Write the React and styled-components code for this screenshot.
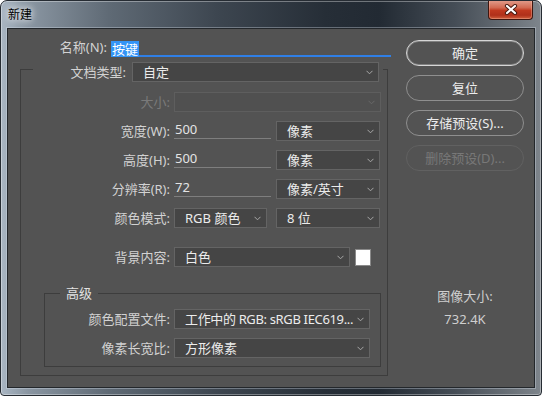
import React from 'react'
import styled, { createGlobalStyle } from 'styled-components'

const GlobalStyle = createGlobalStyle`
  html, body {
    margin: 0;
    padding: 0;
    background: #ffffff;
  }
  * { box-sizing: border-box; }
`

const FONT = `"Noto Sans", "Noto Sans CJK SC", sans-serif`

const Window = styled.div`
  width: 542px;
  height: 396px;
  display: flex;
  flex-direction: column;
  border: 1px solid #262c33;
  border-radius: 7px 7px 4px 4px;
  overflow: hidden;
  background: linear-gradient(90deg, #a9b6c3 0%, #8a96a2 5%, #5f6a75 20%, #3d4650 40%, #262e37 60%, #222a33 70%, #454d56 84%, #6c737a 95%, #7e858c 100%);
  box-shadow: inset 0 0 0 1px rgba(255, 255, 255, 0.35);
  font-family: ${FONT};
`

const TitleBar = styled.div`
  height: 27px;
  display: flex;
  justify-content: space-between;
  align-items: flex-start;
  padding-left: 7px;
  padding-right: 8px;
`

const Title = styled.div`
  font-size: 12px;
  line-height: 27px;
  color: #000;
  text-shadow: 0 0 6px rgba(255, 255, 255, 0.9), 0 0 10px rgba(255, 255, 255, 0.7);
`

const CloseButton = styled.div`
  width: 45px;
  height: 20px;
  margin-top: -1px;
  display: flex;
  align-items: center;
  justify-content: center;
  border: 1px solid #3e1710;
  border-top: none;
  border-radius: 0 0 4px 4px;
  background: linear-gradient(180deg, #e3a08f 0%, #d26a52 40%, #c0391f 55%, #b0301a 80%, #d0603d 100%);
  box-shadow: inset 0 0 0 1px rgba(255, 200, 180, 0.35);
`

const Client = styled.div`
  flex: 1;
  margin: 0 6px 7px 6px;
  background: #535353;
  border: 1px solid #23272b;
  box-shadow: 0 0 0 1px rgba(220, 230, 240, 0.35);
  display: grid;
  grid-template-columns: 371px 118px;
  column-gap: 15px;
  align-items: start;
  padding-left: 12px;
`

const LeftColumn = styled.div`
  padding-top: 8px;
  display: flex;
  flex-direction: column;
`

const RightColumn = styled.div`
  padding-top: 11px;
  display: flex;
  flex-direction: column;
  gap: 9px;
`

const NameRow = styled.div`
  display: flex;
  align-items: center;
  height: 20px;
`

const Label = styled.div`
  width: ${p => p.$w}px;
  flex: none;
  text-align: right;
  font-size: 13px;
  line-height: 20px;
  white-space: nowrap;
  color: ${p => (p.$disabled ? '#7a7a7a' : '#d2d2d2')};
  margin-right: ${p => p.$gap || 4}px;
`

const NameInput = styled.div`
  width: 280px;
  height: 19px;
  border-bottom: 2px solid #2f7fe6;
  display: flex;
  align-items: flex-start;
`

const Selected = styled.span`
  background: #3394f6;
  color: #ffffff;
  font-size: 13px;
  line-height: 13px;
  padding: 2px 1px 1px 1px;
  margin-top: 3px;
`

const GroupBox = styled.fieldset`
  margin: ${p => p.$mt || 0}px 0 0 ${p => p.$ml || 0}px;
  width: ${p => p.$w}px;
  border: 1px solid #3d3d3d;
  padding: ${p => p.$pt}px 0 8px 0;
  min-width: 0;
  display: flex;
  flex-direction: column;
  gap: 9px;
`

const HeaderLegend = styled.legend`
  margin-left: 12px;
  padding: 5px 4px 0 4px;
  display: flex;
  align-items: center;
`

const TextLegend = styled.legend`
  margin-left: 15px;
  padding: 0 6px;
  font-size: 13px;
  line-height: 16px;
  color: #e2e2e2;
`

const Row = styled.div`
  display: flex;
  align-items: center;
  height: 20px;
  margin-top: ${p => p.$mt || 0}px;
`

const Select = styled.div`
  width: ${p => p.$w}px;
  height: 20px;
  flex: none;
  margin-right: ${p => p.$mr || 0}px;
  display: flex;
  align-items: center;
  justify-content: space-between;
  gap: 4px;
  padding: 0 5px 0 10px;
  background: ${p => (p.$disabled ? '#505050' : '#454545')};
  border: 1px solid ${p => (p.$disabled ? '#5e5e5e' : '#646464')};
  color: #ececec;
  font-size: 13px;
  white-space: nowrap;
  svg { flex: none; }
`

const SelectText = styled.span`
  line-height: 18px;
  letter-spacing: ${p => (p.$tight ? '-0.35px' : 'normal')};
`

const NumInput = styled.div`
  width: 97px;
  height: 18px;
  margin-right: 5px;
  flex: none;
  border-bottom: 1px solid #7e7e7e;
  color: #e4e4e4;
  font-size: 13px;
  line-height: 17px;
  padding-left: 1px;
  align-self: flex-start;
`

const Swatch = styled.div`
  width: 16px;
  height: 17px;
  background: #ffffff;
  border: 1px solid #8a8a8a;
`

const Button = styled.div`
  height: 26px;
  border-radius: 13px;
  border: 1px solid ${p => (p.$primary ? '#d6d6d6' : p.$disabled ? '#616161' : '#8f8f8f')};
  box-shadow: ${p => (p.$primary ? 'inset 0 0 0 1px rgba(214,214,214,0.35)' : 'none')};
  color: ${p => (p.$disabled ? '#787878' : '#ececec')};
  font-size: 13px;
  line-height: 24px;
  text-align: center;
  white-space: nowrap;
`

const Info = styled.div`
  margin-top: 108px;
  text-align: center;
  font-size: 13px;
  line-height: 16px;
  color: #cfcfcf;
  display: flex;
  flex-direction: column;
  gap: 7px;
`

function Chevron({ dim }) {
  return (
    <svg width="7" height="5" viewBox="0 0 7 5">
      <polyline points="0.5,0.8 3.5,3.8 6.5,0.8" fill="none" stroke={dim ? '#686868' : '#a8a8a8'} strokeWidth="1" />
    </svg>
  )
}

function Dropdown({ w, mr, disabled, tight, children }) {
  return (
    <Select $w={w} $mr={mr} $disabled={disabled}>
      <SelectText $tight={tight}>{children}</SelectText>
      <Chevron dim={disabled} />
    </Select>
  )
}

export default function App() {
  return (
    <>
      <GlobalStyle />
      <Window>
        <TitleBar>
          <Title>新建</Title>
          <CloseButton>
            <svg width="14" height="11" viewBox="0 0 14 11">
              <path d="M3 2 L11 9 M11 2 L3 9" stroke="#4a1c12" strokeWidth="4.2" strokeLinecap="round" />
              <path d="M3 2 L11 9 M11 2 L3 9" stroke="#ffffff" strokeWidth="2.2" strokeLinecap="round" />
            </svg>
          </CloseButton>
        </TitleBar>
        <Client>
          <LeftColumn>
            <NameRow>
              <Label $w={87}>名称(N):</Label>
              <NameInput>
                <Selected>按键</Selected>
              </NameInput>
            </NameRow>
            <GroupBox $w={368} $pt={10}>
              <HeaderLegend>
                <Label $w={89} $gap={6}>文档类型:</Label>
                <Dropdown w={247}>自定</Dropdown>
              </HeaderLegend>
              <Row>
                <Label $w={149} $disabled>大小:</Label>
                <Dropdown w={207} disabled />
              </Row>
              <Row>
                <Label $w={149}>宽度(W):</Label>
                <NumInput>500</NumInput>
                <Dropdown w={104}>像素</Dropdown>
              </Row>
              <Row>
                <Label $w={149}>高度(H):</Label>
                <NumInput>500</NumInput>
                <Dropdown w={104}>像素</Dropdown>
              </Row>
              <Row>
                <Label $w={149}>分辨率(R):</Label>
                <NumInput>72</NumInput>
                <Dropdown w={104}>像素/英寸</Dropdown>
              </Row>
              <Row>
                <Label $w={149}>颜色模式:</Label>
                <Dropdown w={93} mr={9}>RGB 颜色</Dropdown>
                <Dropdown w={104}>8 位</Dropdown>
              </Row>
              <Row $mt={10}>
                <Label $w={149}>背景内容:</Label>
                <Dropdown w={176} mr={5}>白色</Dropdown>
                <Swatch />
              </Row>
              <GroupBox $w={337} $ml={23} $mt={9} $pt={8}>
                <TextLegend>高级</TextLegend>
                <Row>
                  <Label $w={125}>颜色配置文件:</Label>
                  <Dropdown w={196} tight>工作中的 RGB: sRGB IEC619...</Dropdown>
                </Row>
                <Row>
                  <Label $w={125}>像素长宽比:</Label>
                  <Dropdown w={196}>方形像素</Dropdown>
                </Row>
              </GroupBox>
            </GroupBox>
          </LeftColumn>
          <RightColumn>
            <Button $primary>确定</Button>
            <Button>复位</Button>
            <Button>存储预设(S)...</Button>
            <Button $disabled>删除预设(D)...</Button>
            <Info>
              <span>图像大小:</span>
              <span>732.4K</span>
            </Info>
          </RightColumn>
        </Client>
      </Window>
    </>
  )
}
